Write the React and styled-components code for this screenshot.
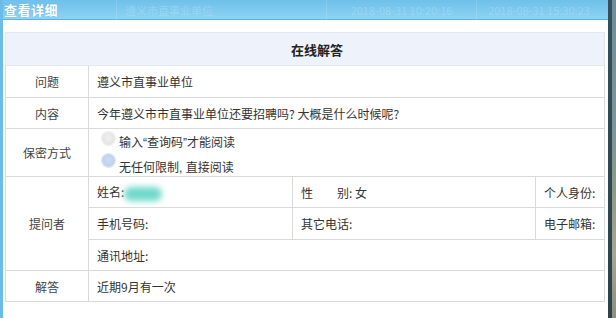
import React from "react";
import styled, { createGlobalStyle } from "styled-components";

const Global = createGlobalStyle`
  html, body { margin: 0; padding: 0; background: #fff; }
  body { font-family: "Noto Sans CJK SC", "Noto Sans", sans-serif; }
`;

const Screen = styled.div`
  display: flex;
  width: 616px;
  height: 318px;
  overflow: hidden;
`;

const Panel = styled.div`
  width: 605px;
  border-left: 3px solid #6bbde8;
  display: flex;
  flex-direction: column;
  background: #fff;
`;

const Edge = styled.div`
  width: 4px;
  background: linear-gradient(#35505c, #2b434d);
`;

const Backdrop = styled.div`
  flex: 1;
  background: linear-gradient(#6f8d98 0%, #7c9597 40%, #8f9a86 60%, #a7a690 80%, #8a8f80 100%);
`;

const TitleBar = styled.div`
  height: 20px;
  display: flex;
  align-items: center;
  background: linear-gradient(#6fc0ea, #8cd3f4);
  border-bottom: 1px solid #5cb2df;
  box-sizing: border-box;
`;

const Title = styled.div`
  width: 112px;
  padding-left: 1px;
  color: #fff;
  font-weight: 700;
  font-size: 13px;
  letter-spacing: 0.5px;
  text-shadow: 0 0 1px rgba(40, 110, 160, 0.4);
`;

const Ghost = styled.div`
  width: ${(p) => p.$w}px;
  height: 20px;
  display: flex;
  align-items: center;
  justify-content: ${(p) => (p.$center ? "center" : "flex-start")};
  padding-left: ${(p) => (p.$center ? 0 : 8)}px;
  box-sizing: border-box;
  border-left: 1px solid rgba(255, 255, 255, 0.14);
  color: rgba(255, 255, 255, 0.2);
  font-size: 11px;
`;

const Body = styled.div`
  flex: 1;
  padding: 12px 1px 0 2px;
`;

const Table = styled.table`
  width: 599px;
  border-collapse: collapse;
  table-layout: fixed;
  font-size: 12px;
  color: #333;
`;

const HeadCell = styled.th`
  height: 32px;
  padding: 0 0 0 24px;
  background: #eef3fb;
  border: 1px solid #e3e7ee;
  font-size: 13px;
  font-weight: 700;
  color: #222;
  text-align: center;
`;

const Label = styled.td`
  border: 1px solid #dadada;
  text-align: center;
  color: #444;
  padding: 0;
`;

const Cell = styled.td`
  border: 1px solid #dadada;
  padding: 0 0 0 8px;
  height: ${(p) => p.$h || 30}px;
  white-space: nowrap;
  overflow: hidden;
`;

const RadioRow = styled.div`
  display: flex;
  align-items: center;
  height: 22px;
  padding-left: 5px;
  gap: 4px;
  margin-top: ${(p) => p.$mt || 0}px;
`;

const Radio = styled.span`
  width: 13px;
  height: 13px;
  border-radius: 50%;
  background: ${(p) =>
    p.$on
      ? "radial-gradient(circle at 50% 45%, #c9dcf3 0%, #bdd3ef 60%, #d6e3f4 100%)"
      : "radial-gradient(circle at 50% 45%, #f0f0f0 0%, #e4e4e4 70%, #ebebeb 100%)"};
  box-shadow: 0 0 1px 1px ${(p) => (p.$on ? "#dbe6f4" : "#eee")};
  margin-top: ${(p) => (p.$on ? -8 : -6)}px;
`;

const RadioText = styled.span`
  color: #333;
  margin-top: ${(p) => p.$mt || 0}px;
`;

const Narrow = styled.span`
  font-family: "Liberation Sans", sans-serif;
`;

const Blur = styled.span`
  display: inline-block;
  width: 38px;
  height: 14px;
  vertical-align: middle;
  border-radius: 8px;
  background: #6fd9ca;
  filter: blur(3px);
`;

const Wide = styled.span`
  white-space: pre;
`;

export default function App() {
  return (
    <>
      <Global />
      <Screen>
        <Panel>
          <TitleBar>
            <Title>查看详细</Title>
            <Ghost $w={210}>遵义市直事业单位</Ghost>
            <Ghost $w={150} $center>2018-08-31 10:20:16</Ghost>
            <Ghost $w={125} $center>2018-08-31 15:30:23</Ghost>
          </TitleBar>
          <Body>
            <Table>
              <colgroup>
                <col style={{ width: 83 }} />
                <col style={{ width: 204 }} />
                <col style={{ width: 243 }} />
                <col style={{ width: 69 }} />
              </colgroup>
              <tbody>
                <tr>
                  <HeadCell colSpan={4}>在线解答</HeadCell>
                </tr>
                <tr>
                  <Label>问题</Label>
                  <Cell colSpan={3} $h={31}>遵义市直事业单位</Cell>
                </tr>
                <tr>
                  <Label>内容</Label>
                  <Cell colSpan={3} $h={30}>今年遵义市市直事业单位还要招聘吗? 大概是什么时候呢?</Cell>
                </tr>
                <tr>
                  <Label>保密方式</Label>
                  <Cell colSpan={3} $h={47}>
                    <RadioRow>
                      <Radio />
                      <RadioText>输入<Narrow>“</Narrow>查询码<Narrow>”</Narrow>才能阅读</RadioText>
                    </RadioRow>
                    <RadioRow $mt={1}>
                      <Radio $on />
                      <RadioText $mt={4}>无任何限制<Narrow>, </Narrow>直接阅读</RadioText>
                    </RadioRow>
                  </Cell>
                </tr>
                <tr>
                  <Label rowSpan={3}>提问者</Label>
                  <Cell $h={30}>姓名:<Blur /></Cell>
                  <Cell>
                    <Wide>性　　别: 女</Wide>
                  </Cell>
                  <Cell>个人身份:</Cell>
                </tr>
                <tr>
                  <Cell $h={31}>手机号码:</Cell>
                  <Cell>其它电话:</Cell>
                  <Cell>电子邮箱:</Cell>
                </tr>
                <tr>
                  <Cell colSpan={3} $h={30}>通讯地址:</Cell>
                </tr>
                <tr>
                  <Label>解答</Label>
                  <Cell colSpan={3} $h={30}>近期9月有一次</Cell>
                </tr>
              </tbody>
            </Table>
          </Body>
        </Panel>
        <Edge />
        <Backdrop />
      </Screen>
    </>
  );
}
